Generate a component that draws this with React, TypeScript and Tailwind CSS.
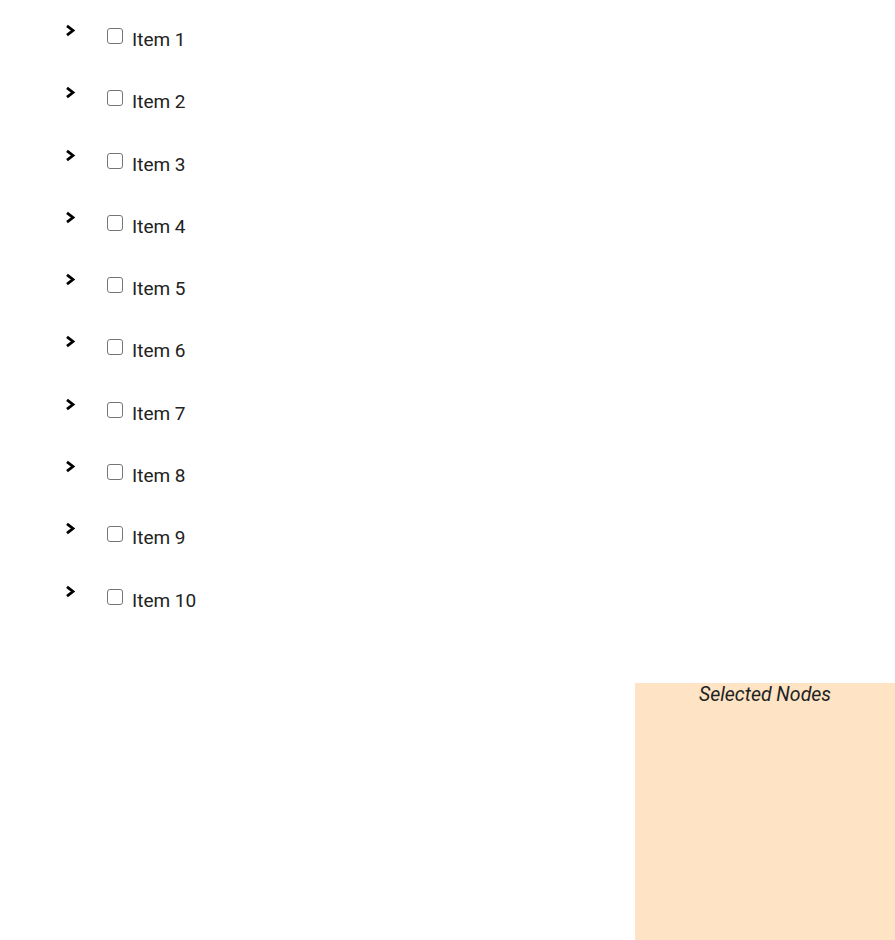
import React from "react";

const items = Array.from({ length: 10 }, (_, i) => `Item ${i + 1}`);

function Chevron() {
  return (
    <svg width="11" height="13" viewBox="0 0 11 13" className="ml-[65px] shrink-0">
      <polyline
        points="2,1.8 8,6.5 2,11.2"
        fill="none"
        stroke="#000"
        strokeWidth="2.8"
        strokeLinecap="butt"
        strokeLinejoin="miter"
      />
    </svg>
  );
}

export default function App() {
  return (
    <div className="relative h-[940px] w-[895px] overflow-hidden bg-white font-['Roboto',sans-serif] text-[#222]">
      <ul className="pt-[24px]">
        {items.map((label) => (
          <li key={label} className="flex h-[62.3px] items-start">
            <Chevron />
            <input
              type="checkbox"
              className="ml-[31px] mt-[4px] h-[16px] w-[16px] shrink-0 appearance-none rounded-[3px] border border-[#767676] bg-white"
            />
            <span className="ml-[9px] mt-[6px] text-[19px] leading-[20px]">{label}</span>
          </li>
        ))}
      </ul>
      <div className="mt-[36px] flex justify-end">
        <div className="h-[257px] w-[260px] bg-[#fee4c5] pt-[1px] text-center">
          <span className="text-[19.5px] italic leading-[22px] text-[#222]">Selected Nodes</span>
        </div>
      </div>
    </div>
  );
}
